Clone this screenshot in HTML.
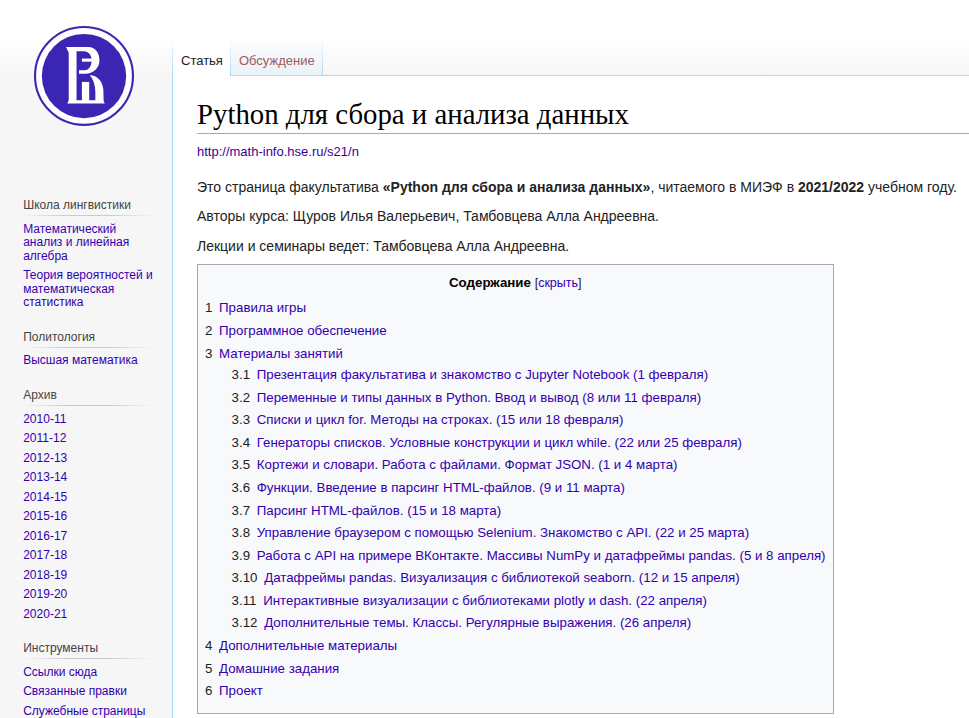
<!DOCTYPE html>
<html lang="ru">
<head>
<meta charset="utf-8">
<title>Python для сбора и анализа данных</title>
<style>
html,body{margin:0;padding:0}
html{font-size:100%}
body{width:969px;height:718px;overflow:hidden;position:relative;background:#f6f6f6;font-family:"Liberation Sans",sans-serif;font-size:16px;color:#222}
a{text-decoration:none;color:#3300b0}
#page-base{position:absolute;left:0;top:-4px;width:969px;height:80px;background:linear-gradient(#ffffff 50%,#f6f6f6 100%)}
/* tabs */
#tabs{position:absolute;z-index:3;left:172px;top:36px;height:40px;padding-left:1px;background:linear-gradient(to bottom,#ffffff 0,#a7d7f9 100%) no-repeat left bottom/1px 100%}
#tabs ul{list-style:none;margin:0;padding:0;height:100%;float:left}
#tabs li{float:left;display:block;height:100%;margin:0;padding:0;line-height:1.125em;white-space:nowrap;background:linear-gradient(to top,#77c1f6 0,#e8f2f8 1px,#ffffff 100%) repeat-x left bottom}
#tabs li.selected{background:#fff}
#tabs li a{display:block;float:left;box-sizing:border-box;height:40px;font-size:13px;padding:1.25em 8px 0 8px;color:#3300b0;background:linear-gradient(to bottom,#ffffff 0,#a7d7f9 100%) no-repeat right bottom/1px 100%}
#tabs li.selected a{color:#222}
#tabs li.new a{color:#a55858}
/* content */
#content{position:absolute;left:172px;top:75px;width:900px;height:700px;background:#fff;border:1px solid #a7d7f9;border-right:0;padding:20px 24px 24px 24px;box-sizing:border-box;color:#222}
h1{font-family:"Liberation Serif",serif;font-weight:normal;font-size:28.8px;line-height:1.3;margin:0 0 0.25em 0;padding:0;border-bottom:1px solid #a2a9b1;color:#000;width:1200px}
#body{font-size:14px;line-height:1.6}
#body p{margin:0.5em 0}
#siteSub{font-size:13px;line-height:20.8px;margin:0 0 13.5px 0}
#siteSub a{color:#3b0098}
.toc{display:table;border:1px solid #a2a9b1;background:#f8f9fa;padding:7px 7px 7.25px 7px;font-size:95%;margin:0;position:relative;top:0.16px}
.toctitle{text-align:center}
.toctitle h2{display:inline;font-size:100%;font-weight:bold;margin:0;padding:0;border:0;font-family:"Liberation Sans",sans-serif;color:#000}
.toctoggle{font-size:94%}
.toc ul{list-style:none;margin:0.3em 0;padding:0}
.toc ul ul{margin:0 0 0 2em}
.toc li{margin:0 0 0.1em 0;padding:0}
.tocnumber{color:#222;display:table-cell;padding-right:0.5em}
.toctext{display:table-cell}
/* panel */
#logo{position:absolute;left:0;top:0}
#panel{position:absolute;left:4px;top:184.9px;width:160px}
.portal{margin:0 9.6px 0 11.2px;padding:4px 0}
.portal h3{font-size:12px;color:#444;font-weight:normal;margin:6px 0 0 8px;padding:3px 0;line-height:15px;background:linear-gradient(to right,rgba(200,204,209,0) 0,#c8ccd1 33%,#c8ccd1 66%,rgba(200,204,209,0) 100%) no-repeat center bottom/100% 1px}
.portal ul{list-style:none;margin:0 0 0 8px;padding:3.75px 0 0}
.portal li{font-size:12px;line-height:1.125em;padding:3px 0;margin:0;word-wrap:break-word}
</style>
</head>
<body>
<div id="page-base"></div>
<div id="tabs">
<ul>
<li class="selected"><a href="#">Статья</a></li>
<li class="new"><a href="#">Обсуждение</a></li>
</ul>
</div>
<div id="content">
<h1>Python для сбора и анализа данных</h1>
<div id="body">
<div id="siteSub"><a href="#">http://math-info.hse.ru/s21/n</a></div>
<p>Это страница факультатива <b>«Python для сбора и анализа данных»</b>, читаемого в МИЭФ в <b>2021/2022</b> учебном году.</p>
<p>Авторы курса: Щуров Илья Валерьевич, Тамбовцева Алла Андреевна.</p>
<p>Лекции и семинары ведет: Тамбовцева Алла Андреевна.</p>
<div class="toc">
<div class="toctitle"><h2>Содержание</h2> <span class="toctoggle">[<a href="#">скрыть</a>]</span></div>
<ul>
<li><a href="#"><span class="tocnumber">1</span><span class="toctext">Правила игры</span></a></li>
<li><a href="#"><span class="tocnumber">2</span><span class="toctext">Программное обеспечение</span></a></li>
<li><a href="#"><span class="tocnumber">3</span><span class="toctext">Материалы занятий</span></a>
<ul>
<li><a href="#"><span class="tocnumber">3.1</span><span class="toctext">Презентация факультатива и знакомство с Jupyter Notebook (1 февраля)</span></a></li>
<li><a href="#"><span class="tocnumber">3.2</span><span class="toctext">Переменные и типы данных в Python. Ввод и вывод (8 или 11 февраля)</span></a></li>
<li><a href="#"><span class="tocnumber">3.3</span><span class="toctext">Списки и цикл for. Методы на строках. (15 или 18 февраля)</span></a></li>
<li><a href="#"><span class="tocnumber">3.4</span><span class="toctext">Генераторы списков. Условные конструкции и цикл while. (22 или 25 февраля)</span></a></li>
<li><a href="#"><span class="tocnumber">3.5</span><span class="toctext">Кортежи и словари. Работа с файлами. Формат JSON. (1 и 4 марта)</span></a></li>
<li><a href="#"><span class="tocnumber">3.6</span><span class="toctext">Функции. Введение в парсинг HTML-файлов. (9 и 11 марта)</span></a></li>
<li><a href="#"><span class="tocnumber">3.7</span><span class="toctext">Парсинг HTML-файлов. (15 и 18 марта)</span></a></li>
<li><a href="#"><span class="tocnumber">3.8</span><span class="toctext">Управление браузером с помощью Selenium. Знакомство с API. (22 и 25 марта)</span></a></li>
<li><a href="#"><span class="tocnumber">3.9</span><span class="toctext">Работа с API на примере ВКонтакте. Массивы NumPy и датафреймы pandas. (5 и 8 апреля)</span></a></li>
<li><a href="#"><span class="tocnumber">3.10</span><span class="toctext">Датафреймы pandas. Визуализация с библиотекой seaborn. (12 и 15 апреля)</span></a></li>
<li><a href="#"><span class="tocnumber">3.11</span><span class="toctext">Интерактивные визуализации с библиотеками plotly и dash. (22 апреля)</span></a></li>
<li><a href="#"><span class="tocnumber">3.12</span><span class="toctext">Дополнительные темы. Классы. Регулярные выражения. (26 апреля)</span></a></li>
</ul>
</li>
<li><a href="#"><span class="tocnumber">4</span><span class="toctext">Дополнительные материалы</span></a></li>
<li><a href="#"><span class="tocnumber">5</span><span class="toctext">Домашние задания</span></a></li>
<li><a href="#"><span class="tocnumber">6</span><span class="toctext">Проект</span></a></li>
</ul>
</div>
</div>
</div>
<div id="logo">
<svg width="168" height="152" viewBox="0 0 168 152">
<circle cx="84" cy="75.9" r="48.95" fill="#fff" stroke="#3a26b3" stroke-width="2.1"/>
<circle cx="84" cy="76.05" r="42.15" fill="#3a26b3"/>
<g transform="translate(59,41) scale(0.09747)" fill="#fff">
<path d="M72,62 L300,62 C380,62 415,130 415,200 C415,280 350,335 270,335 L205,335 L205,300 L260,300 C310,300 335,250 335,200 C335,150 310,105 250,105 L180,105 L180,620 L100,620 L100,120 C90,100 80,80 72,62 Z"/>
<rect x="235" y="180" width="105" height="32"/>
<path d="M85,642 L100,608 L452,608 L470,642 Z"/>
<rect x="235" y="420" width="75" height="200"/>
<path d="M316,348 C395,352 448,415 455,500 L458,620 L373,620 L373,520 C372,450 352,395 316,348 Z"/>
</g>
</svg>
</div>
<div id="panel">
<div class="portal"><h3>Школа лингвистики</h3>
<ul><li><a href="#">Математический анализ и линейная алгебра</a></li><li><a href="#">Теория вероятностей и математическая статистика</a></li></ul></div>
<div class="portal"><h3>Политология</h3>
<ul><li><a href="#">Высшая математика</a></li></ul></div>
<div class="portal"><h3>Архив</h3>
<ul><li><a href="#">2010-11</a></li><li><a href="#">2011-12</a></li><li><a href="#">2012-13</a></li><li><a href="#">2013-14</a></li><li><a href="#">2014-15</a></li><li><a href="#">2015-16</a></li><li><a href="#">2016-17</a></li><li><a href="#">2017-18</a></li><li><a href="#">2018-19</a></li><li><a href="#">2019-20</a></li><li><a href="#">2020-21</a></li></ul></div>
<div class="portal"><h3>Инструменты</h3>
<ul><li><a href="#">Ссылки сюда</a></li><li><a href="#">Связанные правки</a></li><li><a href="#">Служебные страницы</a></li><li><a href="#">Версия для печати</a></li></ul></div>
</div>
</body>
</html>
